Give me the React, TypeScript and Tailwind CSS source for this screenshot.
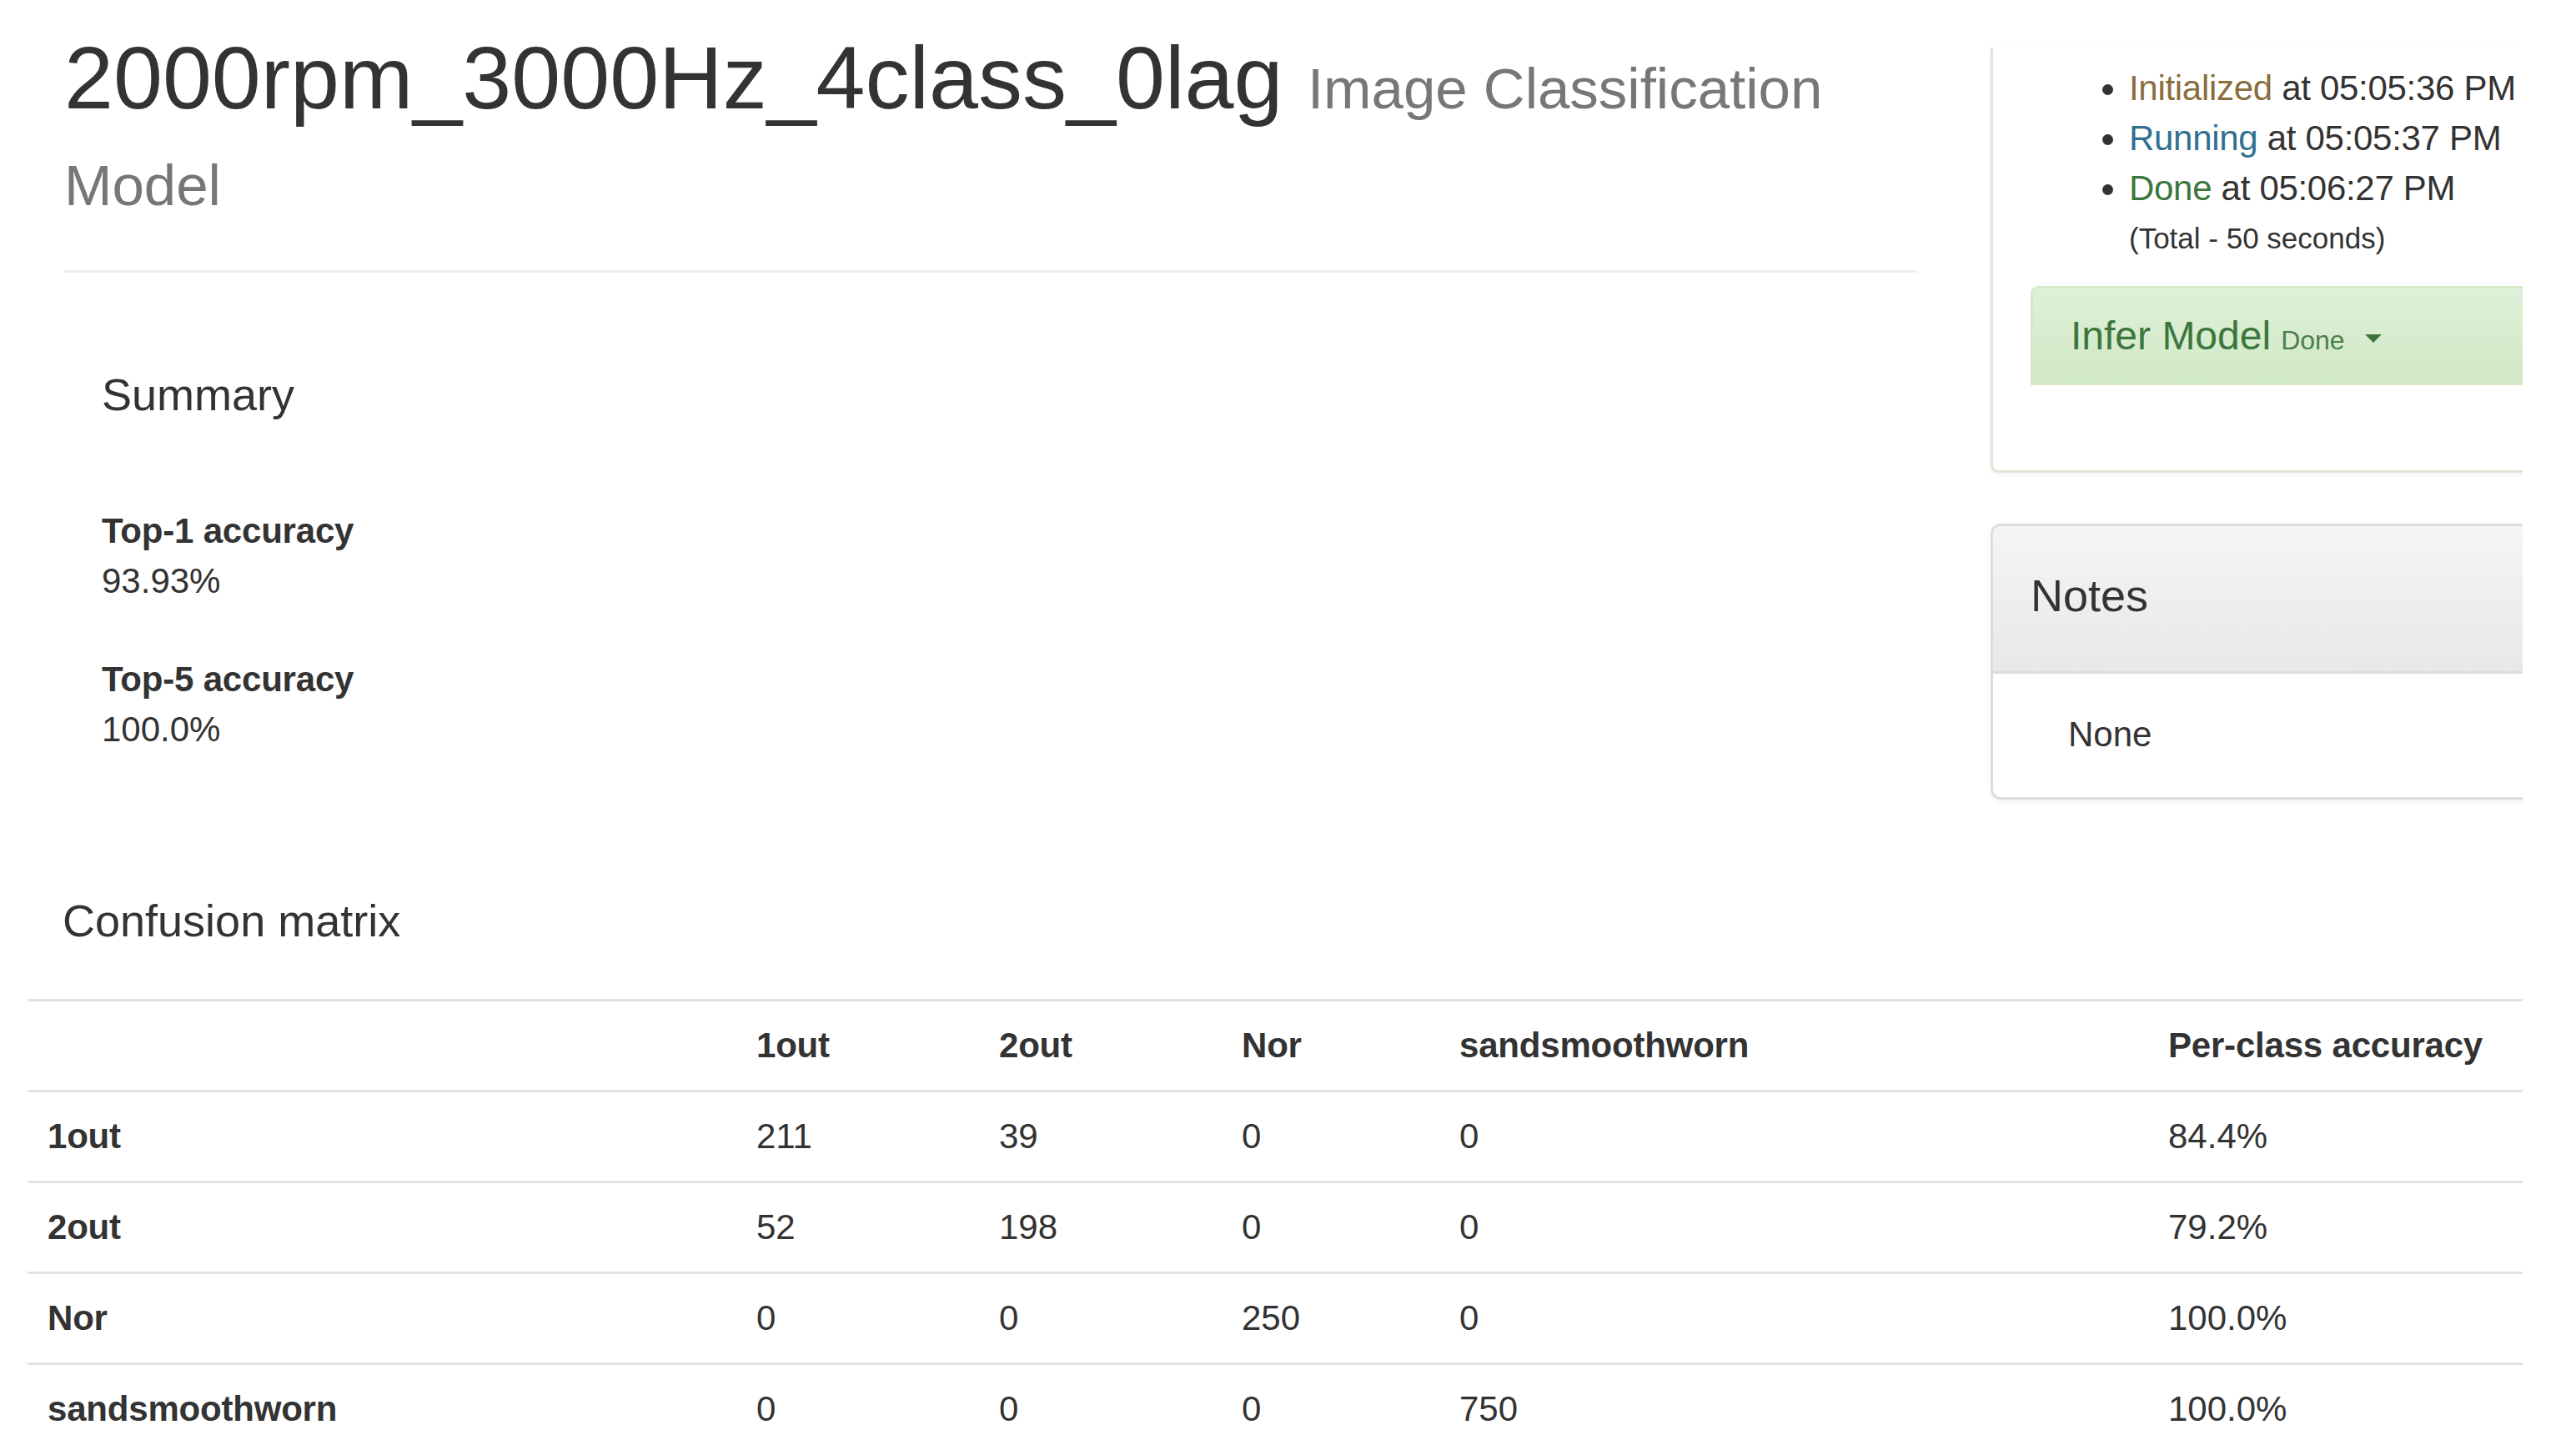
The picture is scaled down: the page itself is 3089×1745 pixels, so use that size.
import React from "react";

const rows = [
  { label: "1out", vals: ["211", "39", "0", "0"], acc: "84.4%" },
  { label: "2out", vals: ["52", "198", "0", "0"], acc: "79.2%" },
  { label: "Nor", vals: ["0", "0", "250", "0"], acc: "100.0%" },
  { label: "sandsmoothworn", vals: ["0", "0", "0", "750"], acc: "100.0%" },
];

const heads = ["1out", "2out", "Nor", "sandsmoothworn", "Per-class accuracy"];

export default function App() {
  return (
    <div className="w-[3089px] h-[1745px] bg-white overflow-hidden text-[#333] font-['Liberation_Sans',Arial,sans-serif] text-[42px] leading-[60px]">
      <div className="w-[3025px] h-full overflow-hidden">
        <div className="flex items-start">
          {/* left column */}
          <div className="w-[2221px] ml-[77px] shrink-0">
            <div className="pt-[35px] pb-[27px] border-b-[3px] border-[#eeeeee]">
              <h1 className="text-[106px] leading-[116px] font-normal mb-[30px]">
                2000rpm_3000Hz_4class_0lag{" "}
                <small className="text-[69px] leading-none text-[#777]">Image Classification Model</small>
              </h1>
            </div>
            <div className="pl-[45px]">
              <h4 className="mt-[117px] text-[54px] leading-[59px]">Summary</h4>
              <dl className="mt-[104px]">
                <dt className="font-bold tracking-[-0.2px]">Top-1 accuracy</dt>
                <dd>93.93%</dd>
              </dl>
              <dl className="mt-[58px]">
                <dt className="font-bold tracking-[-0.2px]">Top-5 accuracy</dt>
                <dd>100.0%</dd>
              </dl>
            </div>
          </div>

          {/* right column */}
          <div className="ml-[89px] w-[700px] shrink-0">
            <div className="mt-[57px] border-x-[3px] border-b-[3px] border-[#dbe7d2] rounded-b-[9px] shadow-[0_3px_6px_rgba(0,0,0,0.05)] px-[45px] pt-[19px] pb-[102px]">
              <ul className="list-disc pl-[118px] tracking-[-0.3px]">
                <li>
                  <span className="text-[#8a6d3b]">Initialized</span> at 05:05:36 PM
                </li>
                <li>
                  <span className="text-[#31708f]">Running</span> at 05:05:37 PM
                </li>
                <li>
                  <span className="text-[#3c763d]">Done</span> at 05:06:27 PM
                </li>
              </ul>
              <div className="pl-[118px] text-[35px] leading-[60px]">(Total - 50 seconds)</div>
              <div className="mt-[27px] border-[3px] border-[#d6e9c6] rounded-t-[9px] bg-gradient-to-b from-[#dff0d8] to-[#d0e9c6] px-[45px] py-[30px]">
                <h3 className="text-[48px] leading-[53px] text-[#3c763d] flex items-baseline whitespace-nowrap">
                  Infer Model
                  <small className="ml-[12px] text-[32px] leading-none text-[#4a7f4b]">Done</small>
                  <span className="ml-[24px] inline-block w-0 h-0 self-center mt-[6px] border-x-[10px] border-x-transparent border-t-[10px] border-t-[#3c763d]" />
                </h3>
              </div>
            </div>

            <div className="mt-[61px] border-[3px] border-[#dddddd] rounded-[12px] overflow-hidden shadow-[0_3px_6px_rgba(0,0,0,0.05)]">
              <div className="bg-gradient-to-b from-[#f5f5f5] to-[#e8e8e8] border-b-[3px] border-[#dddddd] px-[45px] pt-[54px] pb-[61px]">
                <h4 className="text-[54px] leading-[59px]">Notes</h4>
              </div>
              <div className="pl-[90px] pt-[43px] pb-[45px]">None</div>
            </div>
          </div>
        </div>

        {/* confusion matrix */}
        <h4 className="ml-[75px] mt-[116px] text-[54px] leading-[59px]">Confusion matrix</h4>
        <table className="ml-[33px] mt-[64px] w-[3060px] table-fixed border-collapse">
          <colgroup>
            <col className="w-[850px]" />
            <col className="w-[291px]" />
            <col className="w-[291px]" />
            <col className="w-[261px]" />
            <col className="w-[850px]" />
            <col className="w-[517px]" />
          </colgroup>
          <thead>
            <tr className="border-t-[3px] border-b-[3px] border-[#e2e2e2]">
              <th className="px-[24px] py-[23px] text-left font-bold"></th>
              {heads.map((h) => (
                <th key={h} className="px-[24px] py-[23px] text-left font-bold whitespace-nowrap tracking-[-0.2px]">
                  {h}
                </th>
              ))}
            </tr>
          </thead>
          <tbody>
            {rows.map((r) => (
              <tr key={r.label} className="border-t-[3px] border-[#e2e2e2]">
                <td className="px-[24px] py-[23px] font-bold tracking-[-0.2px]">{r.label}</td>
                {r.vals.map((v, i) => (
                  <td key={i} className="px-[24px] py-[23px]">
                    {v}
                  </td>
                ))}
                <td className="px-[24px] py-[23px]">{r.acc}</td>
              </tr>
            ))}
          </tbody>
        </table>
      </div>
    </div>
  );
}
